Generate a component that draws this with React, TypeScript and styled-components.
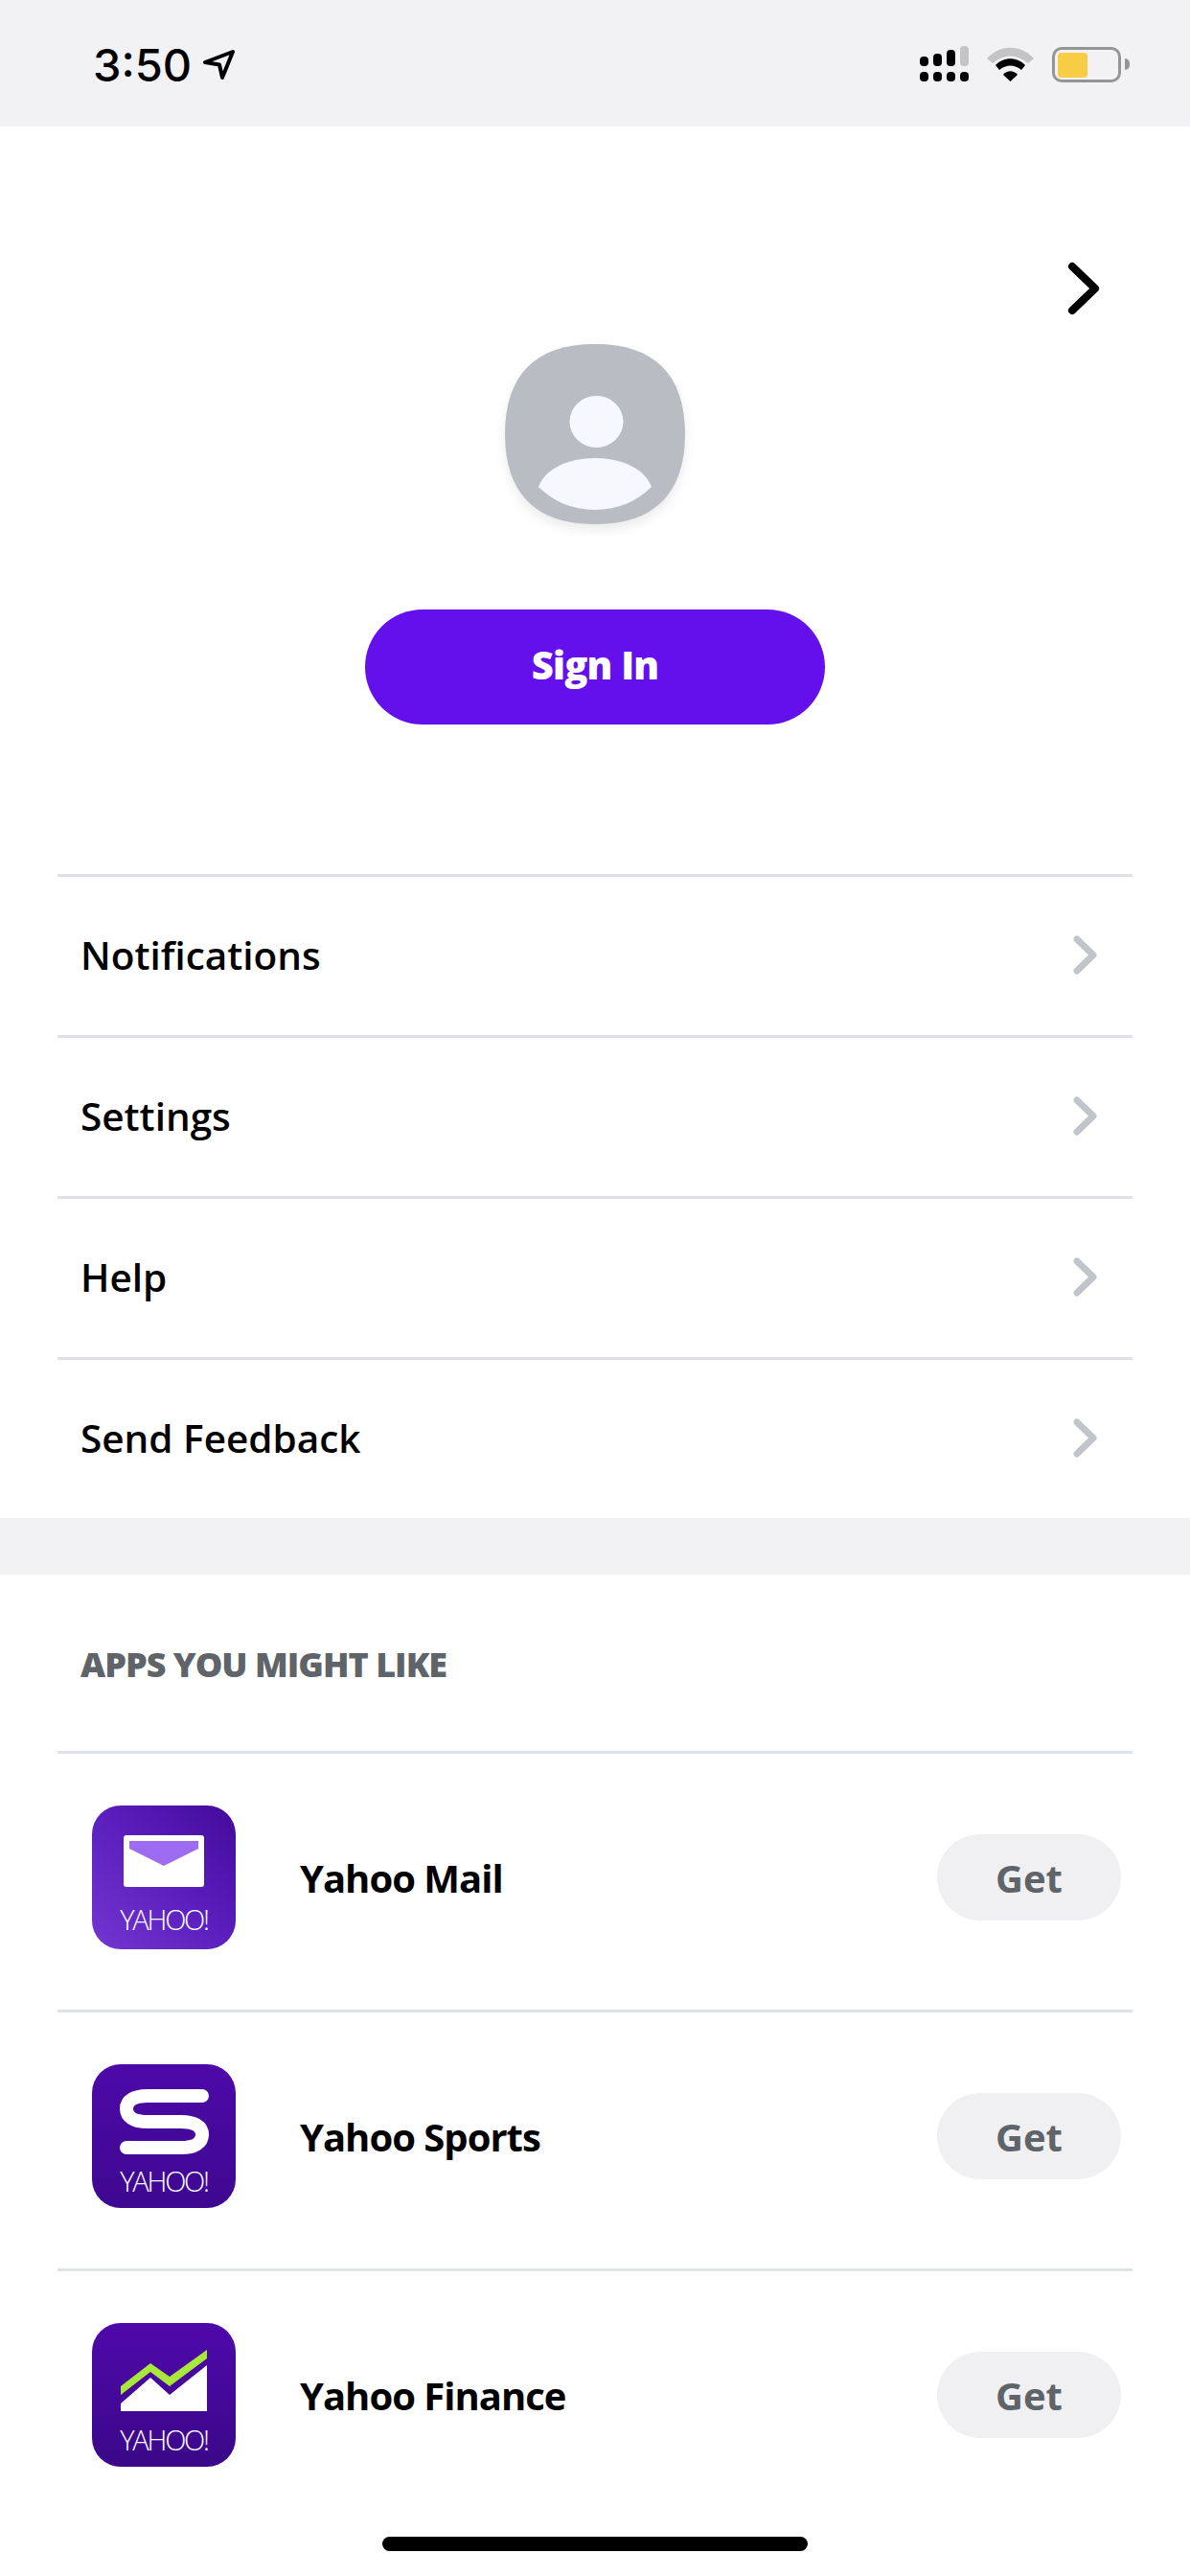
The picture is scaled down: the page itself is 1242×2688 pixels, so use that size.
import styled, { createGlobalStyle } from "styled-components";

const GlobalStyle = createGlobalStyle`
  html, body {
    margin: 0;
    padding: 0;
    background: #ffffff;
  }
  * {
    box-sizing: border-box;
  }
`;

const font = `"Open Sans", "Noto Sans", sans-serif`;

const menuItems = ["Notifications", "Settings", "Help", "Send Feedback"];

export default function App() {
  return (
    <>
      <GlobalStyle />
      <Page>
        <StatusBar>
          <TimeGroup>
            <Time>3:50</Time>
            <svg width="34" height="32" viewBox="0 0 34 32">
              <path
                d="M2 13 L31 2 L20 29 L17 15.5 Z"
                fill="none"
                stroke="#000"
                strokeWidth="4"
                strokeLinejoin="round"
              />
            </svg>
          </TimeGroup>
          <StatusIcons>
            <svg width="51" height="38" viewBox="0 0 51 38">
              <rect x="0" y="11" width="9" height="10" rx="4" fill="#000" />
              <rect x="14" y="8" width="9" height="13" rx="4" fill="#000" />
              <rect x="28" y="4" width="9" height="17" rx="4" fill="#000" />
              <rect x="42" y="0" width="9" height="21" rx="4" fill="#c4c4c6" />
              <rect x="0" y="27" width="9" height="10" rx="4" fill="#000" />
              <rect x="14" y="27" width="9" height="10" rx="4" fill="#000" />
              <rect x="28" y="27" width="9" height="10" rx="4" fill="#000" />
              <rect x="42" y="27" width="9" height="10" rx="4" fill="#000" />
            </svg>
            <svg width="49" height="38" viewBox="0 0 49 38">
              <path d="M0 13 C14 -2 35 -2 49 13 L43 18 C31 8 18 8 6 18 Z" fill="#c4c4c6" />
              <path d="M9 20 C17 11 32 11 40 20 L36 25 C29 19 20 19 13 25 Z" fill="#000" />
              <path d="M17 30 C21 25 28 25 32 30 L24.5 37 Z" fill="#000" />
            </svg>
            <Battery>
              <BatteryFill />
            </Battery>
          </StatusIcons>
        </StatusBar>

        <Profile>
          <ForwardRow>
            <svg width="36" height="56" viewBox="0 0 36 56">
              <path
                d="M5 5 L29 28 L5 51"
                fill="none"
                stroke="#000"
                strokeWidth="8"
                strokeLinecap="round"
                strokeLinejoin="round"
              />
            </svg>
          </ForwardRow>
          <Avatar width="188" height="188" viewBox="0 0 188 188">
            <path
              d="M94 0 C156 0 188 32 188 94 C188 156 156 188 94 188 C32 188 0 156 0 94 C0 32 32 0 94 0 Z"
              fill="#b9bdc3"
            />
            <ellipse cx="95.5" cy="81" rx="28" ry="27" fill="#f6f8fd" />
            <path
              d="M35 149 C42 130 66 119 94 119 C122 119 146 130 153 149 C138 164 118 173 94 173 C70 173 50 164 35 149 Z"
              fill="#f6f8fd"
            />
          </Avatar>
          <SignIn>Sign In</SignIn>
        </Profile>

        <Menu>
          {menuItems.map((item) => (
            <MenuRow key={item}>
              <MenuLabel>{item}</MenuLabel>
              <svg width="26" height="41" viewBox="0 0 26 41">
                <path
                  d="M4 4 L21 20.5 L4 37"
                  fill="none"
                  stroke="#c2c4cb"
                  strokeWidth="7"
                  strokeLinecap="round"
                  strokeLinejoin="round"
                />
              </svg>
            </MenuRow>
          ))}
        </Menu>

        <SectionGap />

        <Apps>
          <AppsTitle>APPS YOU MIGHT LIKE</AppsTitle>
          <AppRow>
            <AppIcon
              $bg="linear-gradient(45deg, #7436cf 0%, #5a1fbe 50%, #430b9a 100%)"
              $top={31}
            >
              <svg width="84" height="54" viewBox="0 0 84 54">
                <rect width="84" height="54" rx="3" fill="#fff" />
                <path d="M6 6 H78 V14 L42 32 L6 14 Z" fill="#9d6cf1" />
              </svg>
              <YahooMark $bottom={17}>YAHOO!</YahooMark>
            </AppIcon>
            <AppName>Yahoo Mail</AppName>
            <GetButton>Get</GetButton>
          </AppRow>
          <AppRow>
            <AppIcon $bg="linear-gradient(180deg, #4d09a8 0%, #3e0890 100%)" $top={26}>
              <svg width="93" height="68" viewBox="0 0 93 68">
                <path
                  d="M86 7 H29 C15 7 7 12 7 20.5 C7 29 15 34 29 34 H64 C78 34 86 39 86 47.5 C86 56 78 61 64 61 H7"
                  fill="none"
                  stroke="#fff"
                  strokeWidth="14"
                  strokeLinecap="round"
                />
              </svg>
              <YahooMark $bottom={14}>YAHOO!</YahooMark>
            </AppIcon>
            <AppName>Yahoo Sports</AppName>
            <GetButton>Get</GetButton>
          </AppRow>
          <AppRow>
            <AppIcon $bg="linear-gradient(180deg, #4f09aa 0%, #3a0888 100%)" $top={28}>
              <svg width="90" height="64" viewBox="0 0 90 64">
                <path d="M0 38 L31 14 L51 28 L90 0 V9 L51 38 L31 23 L0 47 Z" fill="#a8e83c" />
                <path d="M0 56 L31 29 L51 47 L90 16 V64 H0 Z" fill="#fff" />
              </svg>
              <YahooMark $bottom={14}>YAHOO!</YahooMark>
            </AppIcon>
            <AppName>Yahoo Finance</AppName>
            <GetButton>Get</GetButton>
          </AppRow>
        </Apps>

        <HomeIndicator />
      </Page>
    </>
  );
}

// Style
const Page = styled.div`
  position: relative;
  width: 1242px;
  height: 2688px;
  overflow: hidden;
  background: #ffffff;
  font-family: ${font};
`;

const StatusBar = styled.div`
  height: 132px;
  padding: 44px 72px 0 97px;
  display: flex;
  justify-content: space-between;
  align-items: flex-start;
  background: #f2f2f5;
`;

const TimeGroup = styled.div`
  display: flex;
  align-items: center;
  gap: 12px;
`;

const Time = styled.div`
  font-family: Inter, "Liberation Sans", sans-serif;
  font-size: 47px;
  font-weight: 500;
  line-height: 48px;
  color: #000000;
`;

const StatusIcons = styled.div`
  padding-top: 4px;
  display: flex;
  align-items: flex-start;
  gap: 19px;
`;

const Battery = styled.div`
  position: relative;
  width: 72px;
  height: 37px;
  margin-top: 1px;
  padding: 2.5px;
  border: 3.5px solid #959597;
  border-radius: 10px;

  &::after {
    content: "";
    position: absolute;
    right: -11.5px;
    top: 8.5px;
    width: 5px;
    height: 12px;
    border-radius: 0 6px 6px 0;
    background: #959597;
  }
`;

const BatteryFill = styled.div`
  width: 31px;
  height: 100%;
  border-radius: 4px;
  background: #f8cd46;
`;

const Profile = styled.div`
  height: 780px;
  display: flex;
  flex-direction: column;
  align-items: center;
`;

const ForwardRow = styled.div`
  width: 100%;
  height: 56px;
  margin-top: 141px;
  padding-right: 92px;
  display: flex;
  justify-content: flex-end;
`;

const Avatar = styled.svg`
  margin-top: 30px;
  filter: drop-shadow(0 6px 6px rgba(0, 0, 0, 0.08));
`;

const SignIn = styled.div`
  width: 480px;
  height: 120px;
  margin-top: 89px;
  padding-bottom: 6px;
  display: flex;
  align-items: center;
  justify-content: center;
  border-radius: 60px;
  background: #6410ed;
  color: #ffffff;
  font-size: 40px;
  font-weight: 800;
  letter-spacing: -0.8px;
`;

const Menu = styled.div`
  padding: 0 60px;
`;

const MenuRow = styled.div`
  height: 168px;
  padding: 0 36px 2px 24px;
  display: flex;
  align-items: center;
  justify-content: space-between;
  border-top: 3px solid #dfe1e7;
`;

const MenuLabel = styled.div`
  font-size: 40.5px;
  font-weight: 600;
  color: #000000;
`;

const SectionGap = styled.div`
  height: 59px;
  background: #f2f2f5;
`;

const Apps = styled.div`
  padding: 0 60px;
`;

const AppsTitle = styled.div`
  height: 184px;
  padding: 70px 24px 0;
  font-size: 36px;
  line-height: 48px;
  font-weight: 800;
  letter-spacing: -1px;
  color: #5f6469;
`;

const AppRow = styled.div`
  height: 270px;
  padding: 0 12px 9px 36px;
  display: flex;
  align-items: center;
  border-top: 3px solid #dfe3e6;
`;

const AppIcon = styled.div<{ $bg: string; $top: number }>`
  position: relative;
  flex: none;
  width: 150px;
  height: 150px;
  padding-top: ${(p) => p.$top}px;
  display: flex;
  justify-content: center;
  align-items: flex-start;
  border-radius: 30px;
  background: ${(p) => p.$bg};
`;

const YahooMark = styled.div<{ $bottom: number }>`
  position: absolute;
  left: 0;
  right: 0;
  bottom: ${(p) => p.$bottom}px;
  text-align: center;
  font-size: 29px;
  font-weight: 300;
  line-height: 29px;
  letter-spacing: -2.2px;
  color: #ffffff;
`;

const AppName = styled.div`
  flex: 1;
  margin-left: 67px;
  font-size: 40px;
  font-weight: 700;
  letter-spacing: -1px;
  color: #000000;
`;

const GetButton = styled.div`
  width: 192px;
  height: 90px;
  display: flex;
  align-items: center;
  justify-content: center;
  border-radius: 45px;
  background: #f0f0f3;
  color: #5f6469;
  font-size: 40px;
  font-weight: 700;
`;

const HomeIndicator = styled.div`
  position: absolute;
  left: 399px;
  bottom: 26px;
  width: 444px;
  height: 15px;
  border-radius: 8px;
  background: #000000;
`;
